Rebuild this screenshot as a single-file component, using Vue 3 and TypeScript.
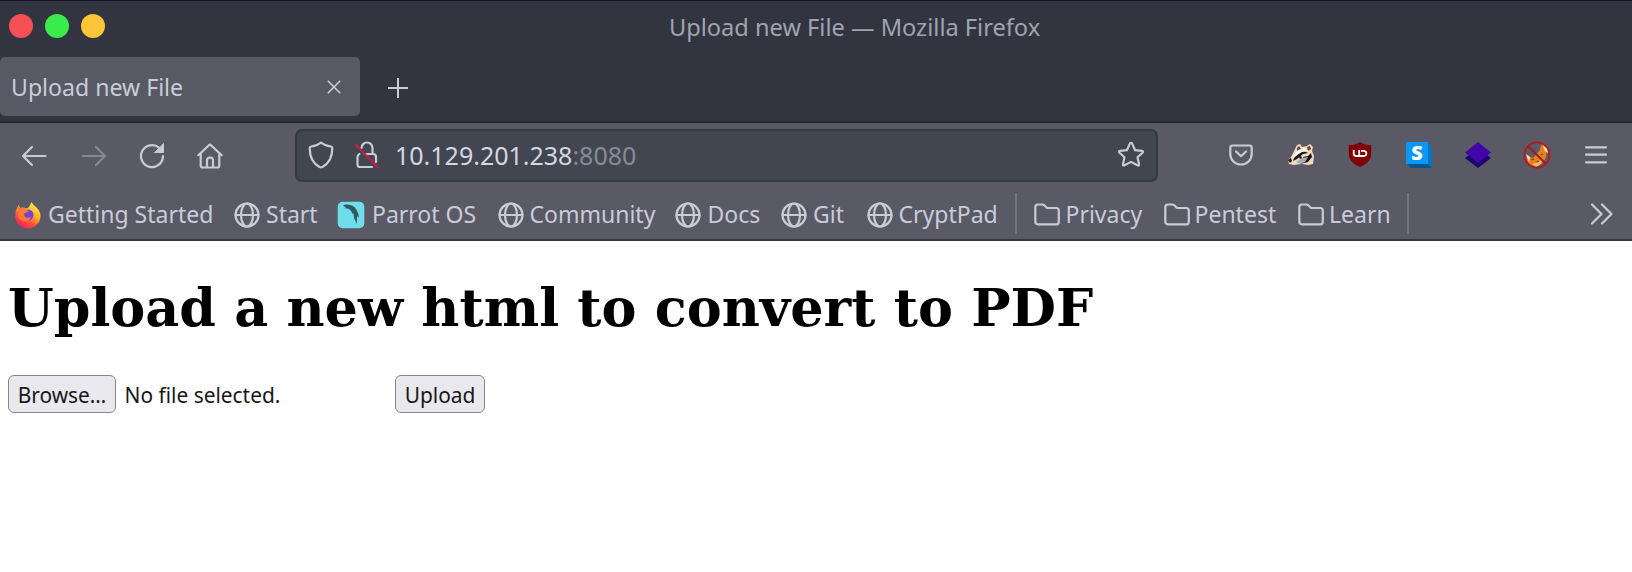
<script setup lang="ts">
type IconKind = 'firefox' | 'globe' | 'parrot' | 'folder'

interface Bookmark {
  label: string
  icon: IconKind
  slot: number
  gap: number
}

interface BookmarkGroup {
  id: string
  width: number
  items: Bookmark[]
}

// `slot` is the horizontal room a bookmark takes, `gap` the space after its icon.
const groups: BookmarkGroup[] = [
  {
    id: 'sites',
    width: 1016,
    items: [
      { label: 'Getting Started', icon: 'firefox', slot: 220, gap: 6.5 },
      { label: 'Start', icon: 'globe', slot: 103, gap: 6.5 },
      { label: 'Parrot OS', icon: 'parrot', slot: 161, gap: 7.5 },
      { label: 'Community', icon: 'globe', slot: 177, gap: 6 },
      { label: 'Docs', icon: 'globe', slot: 106.5, gap: 7 },
      { label: 'Git', icon: 'globe', slot: 85.5, gap: 6 },
      { label: 'CryptPad', icon: 'globe', slot: 148.5, gap: 6 },
    ],
  },
  {
    id: 'folders',
    width: 392,
    items: [
      { label: 'Privacy', icon: 'folder', slot: 130, gap: 4.5 },
      { label: 'Pentest', icon: 'folder', slot: 134, gap: 3.5 },
      { label: 'Learn', icon: 'folder', slot: 109, gap: 4 },
    ],
  },
]
</script>

<template>
  <div class="window">
    <header class="titlebar">
      <div class="lights">
        <span class="light red"></span>
        <span class="light green"></span>
        <span class="light yellow"></span>
      </div>
      <span class="title">Upload new File — Mozilla Firefox</span>
    </header>

    <div class="tabs">
      <div class="tab">
        <span>Upload new File</span>
        <svg class="close" width="14" height="14" viewBox="0 0 14 14"><path d="M.8.8l12.4 12.4M13.2.8L.8 13.2" /></svg>
      </div>
      <svg class="plus" width="20" height="20" viewBox="0 0 20 20"><path d="M10 0v20M0 10h20" /></svg>
    </div>

    <nav class="toolbar">
      <svg class="ico back" width="26" height="26" viewBox="0 0 26 26"><path d="M24.5 13H2M11 4L2 13l9 9" /></svg>
      <svg class="ico forward" width="26" height="26" viewBox="0 0 26 26"><path d="M1.5 13H24M15 4l9 9-9 9" /></svg>
      <svg class="ico reload" width="26" height="26" viewBox="0 0 26 26">
        <path d="M24 13A11 11 0 1 1 20.2 4.8" /><path class="solid" d="M24.5 1v8.5H16z" />
      </svg>
      <svg class="ico home" width="26" height="26" viewBox="0 0 26 26">
        <path d="M1.3 12.2L12 2.2q1-.9 2 0l10.700 10M3.700 10.500v12q0 2 2 2h14.600q2 0 2-2v-12M10 24v-6.500q0-3 3-3t3 3V24" />
      </svg>

      <div class="urlbar">
        <svg class="ico shield" width="26" height="28" viewBox="0 0 26 28">
          <path d="M13 1.600C10 4 6.500 4.900 3 5.500Q1.700 5.800 1.700 7C1.700 16 5 22.500 11.600 26q1.400.7 2.800 0C21 22.500 24.300 16 24.300 7q0-1.200-1.300-1.500C19.500 4.900 16 4 13 1.600z" />
        </svg>
        <svg class="ico lock" width="26" height="28" viewBox="0 0 26 28">
          <path d="M7.500 7a5.500 5.500 0 0 1 11 0v6M12 13h7q3 0 3 3v5M18 26H6q-2.500 0-2.500-2.500V16q0-2 2-3" />
          <path class="slash" d="M2 4l22 22.500" />
        </svg>
        <span class="address">10.129.201.238<span class="port">:8080</span></span>
        <svg class="ico star" width="28" height="28" viewBox="0 0 28 28">
          <path d="M14 1.900q.9 0 1.300 1l2.800 6.300 6.800.7q1.900.4.600 1.800l-5 4.600 1.500 6.800q.2 2-1.600 1.200L14 20.900l-6.400 3.400q-1.800.8-1.600-1.200l1.500-6.800-5-4.600q-1.300-1.400.6-1.800l6.800-.7 2.800-6.300q.4-1 1.300-1z" />
        </svg>
      </div>

      <div class="extensions">
        <svg class="ico pocket" width="24" height="22" viewBox="0 0 24 22">
          <path d="M3.500 1.500h17q2.200 0 2.200 2.200V10a10.700 10.500 0 0 1-21.400 0V3.700q0-2.200 2.200-2.200zM7 7.500l5 4.700 5-4.700" />
        </svg>
        <svg class="badger" width="28" height="24" viewBox="0 0 28 24">
          <path d="M1 17l3-3 4-8 2-4 3-1 2 3 5-1 3-2 3 3-1 4 2 5-1 8-5 1-6-1-8 1-5-1z" fill="#f2d8bf" />
          <path d="M10 5l2-2 2 3-4 3zM20 4l3-1 1 3-3 2z" fill="#664735" />
          <path d="M7 15l5-5 5-2 4 2-5 1-6 5-4 2zM16 14l5-1 3-3 1 4-4 5-8 2 4-4zM1 17l3-2 1 3-2 2z" fill="#151518" />
          <path d="M7 12l4-5 6-2 5 3-7 1-5 3-5 4z" fill="#fff8ed" />
          <path d="M9 19l6-4 6-1-3 5-5 2z" fill="#a7abb2" />
          <circle cx="13.500" cy="14.500" r="1.200" fill="#111" />
        </svg>
        <svg class="ublock" width="24" height="27" viewBox="0 0 24 27">
          <path d="M12 1C9 3.500 5 4 .8 4v9c0 6 4.500 10 11.200 13 6.700-3 11.200-7 11.200-13V4C19 4 15 3.500 12 1z" fill="#800006" />
          <path d="M5.700 9v3.500q0 2.500 2.500 2.500h3V9M13 9.900h2.600q2.800 0 2.800 2.600T15.600 15H11" fill="none" stroke="#fff" stroke-width="1.800" />
        </svg>
        <svg class="letter" width="28" height="28" viewBox="0 0 28 28">
          <path d="M1 21l5 6h21l-5-6z" fill="#06568f" /><path d="M22 1l5 6v20l-5-5z" fill="#0675bd" />
          <path d="M1 1h22v22H1z" fill="#0c96f8" />
          <text x="12" y="18.500" text-anchor="middle">S</text>
        </svg>
        <svg class="stack" width="28" height="28" viewBox="0 0 28 28">
          <path d="M1 17l4-3h18l4 3-13 10z" fill="#20006f" /><path d="M14 1l13 10.500L14 22 1 11.500z" fill="#4305a9" />
        </svg>
        <svg class="nofox" width="28" height="28" viewBox="0 0 28 28">
          <path d="M3 14l3 1 4 2 7-8 1-5q5-1 6 4l-1 8q-3 8-10 9-7 0-9-6z" fill="#e68120" />
          <path d="M3 13l4 3-1 5zM20 5l4 2 1 5-3-2z" fill="#f5dfc9" />
          <path d="M9 23l5-1 5-4-1 5-5 3z" fill="#f4bf6a" />
          <path d="M8 19l3-1M18 14l2-1M14 21l2-1" stroke="#7c3a15" stroke-width="1.300" />
          <circle cx="14" cy="14" r="12.600" fill="none" stroke="#b51a20" stroke-width="1.900" />
          <path d="M5 5l18 18" stroke="#a61b19" stroke-width="2" />
        </svg>
        <svg class="ico menu" width="22" height="20" viewBox="0 0 22 20"><path d="M1 2.300h20M1 9.700h20M1 17.300h20" /></svg>
      </div>
    </nav>

    <div class="bookmarks">
      <div v-for="group in groups" :key="group.id" class="group" :style="{ width: group.width + 'px' }">
        <div v-for="item in group.items" :key="item.label" class="bookmark" :style="{ width: item.slot + 'px', gap: item.gap + 'px' }">
          <svg v-if="item.icon === 'globe'" class="ico" width="26" height="26" viewBox="0 0 26 26">
            <circle cx="13" cy="13" r="11.500" /><ellipse cx="13" cy="13" rx="6" ry="11.500" /><path d="M1.500 13h23" />
          </svg>
          <svg v-else-if="item.icon === 'folder'" class="ico" width="28" height="26" viewBox="0 0 28 26">
            <path d="M2.300 19.500V5.300Q2.300 2.500 5 2.500h4q1.500 0 2.500 1l1.800 1.800q.8.700 2 .7h8q2.500 0 2.500 2.500v11.200q0 2.600-2.500 2.600H5q-2.700 0-2.700-2.800z" />
          </svg>
          <svg v-else-if="item.icon === 'parrot'" width="28" height="28" viewBox="0 0 28 28">
            <rect x=".7" y=".7" width="26.600" height="26.600" rx="5" fill="#6edce9" />
            <path d="M6 4.500q3-1.500 7-.5 5 1 7 6 2 3 2 7l-2-2v8l-3-6-.5-5-1 1q-.5-3-3.500-5-3-1-5-.5l2-1z" fill="#305961" />
          </svg>
          <svg v-else width="28" height="28" viewBox="0 0 28 28">
            <defs>
              <linearGradient id="flame" x1=".85" y1="0" x2=".25" y2="1">
                <stop offset="0" stop-color="#fff44b" /><stop offset=".4" stop-color="#ffb52c" />
                <stop offset=".7" stop-color="#ff5037" /><stop offset="1" stop-color="#ef1769" />
              </linearGradient>
            </defs>
            <path d="M17.500 1q1.500 3 4.500 5 4.500 4 4.500 9a12.700 12.500 0 0 1-25.400 0Q1 9.500 3.500 6l.8-2 2.200 3q3-1 5.500.5l2-.5q2-2 3.500-6z" fill="url(#flame)" />
            <circle cx="14" cy="14" r="5.500" fill="#7544d6" />
            <path d="M3.500 6l3 1q4-1 6 2l2 1q-1 2-4 2-1 3 1.500 4.500 3 1 5-1-1 5-6 5-6-.5-7-6z" fill="#ff7a30" />
          </svg>
          <span>{{ item.label }}</span>
        </div>
      </div>
      <svg class="ico more" width="24" height="22" viewBox="0 0 24 22"><path d="M2 1.500l9.500 9.500L2 20.500M12 1.500l9.500 9.500-9.500 9.500" /></svg>
    </div>

    <main class="page">
      <h1>Upload a new html to convert to PDF</h1>
      <form class="form" @submit.prevent>
        <button type="button" class="browse">Browse…</button>
        <span class="status">No file selected.</span>
        <button type="submit" class="upload">Upload</button>
      </form>
    </main>
  </div>
</template>

<style>
body { margin: 0; background: #fff; }
</style>

<style scoped>
* { box-sizing: border-box; }
.window { width: 1632px; height: 572px; overflow: hidden; background: #fff; font-family: "Noto Sans", sans-serif; color: #c9ccd8; white-space: nowrap; }
svg { display: block; flex: none; overflow: visible; }
svg text { font: 900 20px "Noto Sans", sans-serif; fill: #fff; }
.titlebar { height: 57px; display: flex; background: #323540; border-top: 1px solid #101329; }
.lights { display: flex; gap: 12px; padding: 13px 0 0 9px; width: 669px; }
.light { width: 24px; height: 24px; border-radius: 50%; }
.red { background: #f74f56; }
.green { background: #3bea4b; }
.yellow { background: #fdc638; }
.title { font-size: 23.600px; line-height: 32px; padding-top: 10px; color: #9ea4b2; }
.tabs { height: 66px; display: flex; background: #323540; border-bottom: 2px solid #242733; }
.tab { width: 360px; height: 59px; background: #575a65; border-radius: 5px; padding: 0 19px 0 11px; display: flex; align-items: center; justify-content: space-between; font-size: 23.100px; }
.close, .plus { fill: none; stroke: #c9ccd8; stroke-width: 1.600; }
.plus { margin: 21px 0 0 28px; stroke-width: 2; }
.toolbar { height: 66px; display: flex; align-items: center; background: #595a66; padding: 0 0 1px 21px; }
.ico { fill: none; stroke: #c9ccd8; stroke-width: 2.200; stroke-linecap: round; stroke-linejoin: round; }
.solid { fill: #c9ccd8; stroke-width: 1; }
.forward { margin-left: 34px; opacity: .4; }
.reload { margin-left: 32px; }
.home { margin: 1px 0 0 32px; }
.urlbar { display: flex; align-items: center; width: 863px; height: 53px; margin: -1px 0 0 72px; padding: 0 10px 0 11px; background: #424650; border: 2px solid #343844; border-radius: 7px; }
.lock { margin-left: 20px; }
.slash { stroke: #c51f44; }
.address { width: 722px; margin-left: 15px; font-size: 25px; line-height: 34px; color: #d4d7e0; }
.port { color: #878b96; }
.extensions { display: flex; align-items: center; margin: -2px 0 0 71px; }
.badger { margin-left: 33.500px; }
.ublock { margin-left: 33px; }
.letter { margin-left: 33px; }
.stack { margin-left: 31px; }
.nofox { margin-left: 31px; }
.menu { margin-left: 34px; }
.bookmarks { height: 52px; display: flex; background: #595a66; border-bottom: 2px solid #343743; padding-left: 1px; }
.group { height: 41px; margin-top: 4px; display: flex; align-items: center; border-right: 2px solid #72747f; padding-left: 12.500px; font-size: 23px; }
.group + .group { padding-left: 16px; }
.bookmark { display: flex; align-items: center; flex: none; }
.bookmark span { line-height: 32px; }
.bookmark svg { margin-top: 2px; }
.more { margin: 14px 0 0 181px; }
.page { padding: 0 8px; color: #000; }
h1 { margin: 35px 0 0; font: 700 52.450px/64px "DejaVu Serif", serif; }
.form { display: flex; align-items: center; margin-top: 35px; font-size: 20.900px; }
button { font: 20.900px/28px "Noto Sans", sans-serif; height: 38px; padding: 1px 0 0; color: #171719; background: #e9e9ed; border: 1px solid #85858f; border-radius: 6px; }
.browse { width: 108px; }
.status { width: 279px; padding: 1px 0 0 8.500px; color: #171719; }
.upload { width: 90px; }
</style>
